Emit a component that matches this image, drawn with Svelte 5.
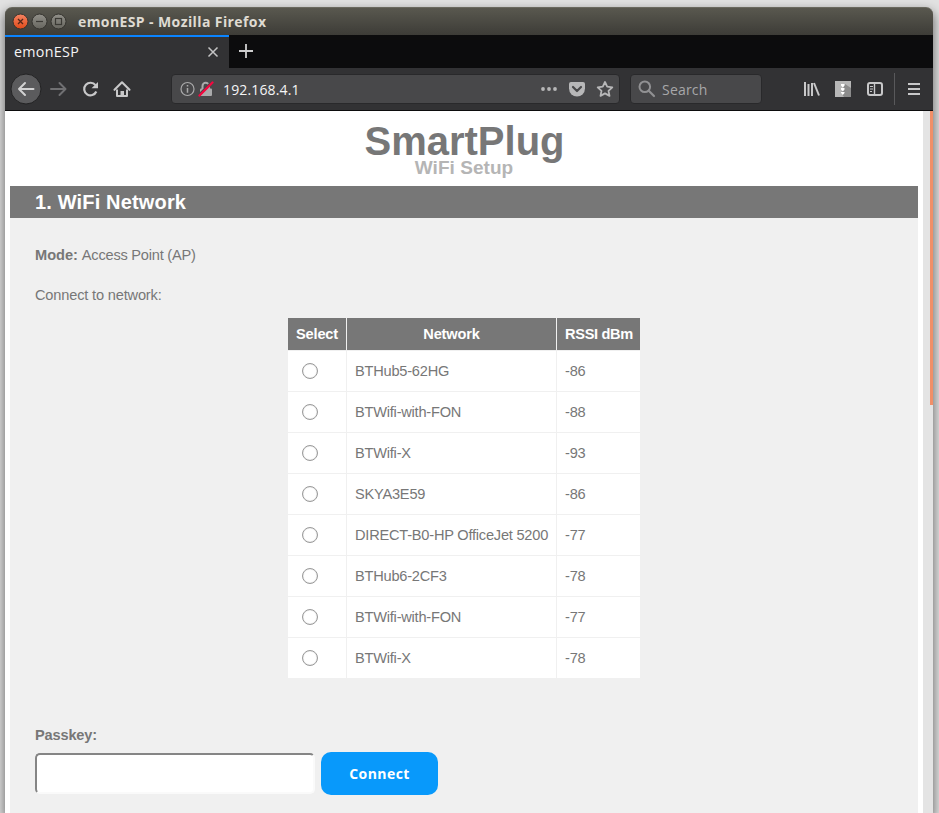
<script>
  const networks = [
    ['BTHub5-62HG', -86],
    ['BTWifi-with-FON', -88],
    ['BTWifi-X', -93],
    ['SKYA3E59', -86],
    ['DIRECT-B0-HP OfficeJet 5200', -77],
    ['BTHub6-2CF3', -78],
    ['BTWifi-with-FON', -77],
    ['BTWifi-X', -78]
  ];
</script>

<div class="desktop">
  <div class="window">
    <header class="titlebar">
      <svg class="controls" width="56" height="18" viewBox="0 0 56 18">
        <defs>
          <linearGradient id="close" x2="0" y2="1"><stop stop-color="#f58463" /><stop offset="1" stop-color="#df4a18" /></linearGradient>
          <linearGradient id="ctl" x2="0" y2="1"><stop stop-color="#92918a" /><stop offset="1" stop-color="#66655e" /></linearGradient>
        </defs>
        <circle cx="8.5" cy="8.500" r="7.5" fill="url(#close)" stroke="#35342f" />
        <circle cx="27.5" cy="8.500" r="7.5" fill="url(#ctl)" stroke="#35342f" />
        <circle cx="46.5" cy="8.500" r="7.5" fill="url(#ctl)" stroke="#35342f" />
        <path d="M6 6l5 5M11 6l-5 5" stroke="#552719" stroke-width="1.3" />
        <path d="M24 8.500h7" stroke="#3b3a35" stroke-width="1.2" />
        <rect x="43.5" y="5.5" width="6" height="6" fill="none" stroke="#3b3a35" stroke-width="1.2" />
      </svg>
      <span class="title">emonESP - Mozilla Firefox</span>
    </header>

    <div class="tabs">
      <div class="tab">
        <span>emonESP</span>
        <svg width="12" height="12" viewBox="0 0 12 12"><path d="M1.5 1.5l9 9M10.5 1.5l-9 9" stroke="#c4c4c5" stroke-width="1.5" /></svg>
      </div>
      <svg class="plus" width="14" height="14" viewBox="0 0 14 14"><path d="M7 0v14M0 7h14" stroke="#cfcfcf" stroke-width="1.8" /></svg>
    </div>

    <nav class="toolbar">
      <svg class="history" width="130" height="32" viewBox="0 0 130 32" fill="none">
        <circle cx="16" cy="16" r="15" fill="#5b5b5d" stroke="#232324" />
        <path d="M23.500 16H9M15 10L9 16l6 6" stroke="#d2d2d3" stroke-width="2" stroke-linecap="round" stroke-linejoin="round" />
        <path d="M41 16h14M49.500 10l6 6l-6 6" stroke="#707072" stroke-width="2" stroke-linecap="round" stroke-linejoin="round" />
        <path d="M85.500 12.200A6.300 6.300 0 1 0 86.300 18.500" stroke="#c8c8c9" stroke-width="2.2" />
        <path d="M88 9v6.200h-6.500z" fill="#c8c8c9" />
        <path d="M104.500 16.800L112 9.300l7.500 7.500" stroke="#c8c8c9" stroke-width="2.100" stroke-linecap="round" stroke-linejoin="round" />
        <path d="M107 16.500V23h10v-6.500" stroke="#c8c8c9" stroke-width="2" stroke-linejoin="round" />
        <path d="M110.500 18h3.500v5h-3.500z" fill="#c8c8c9" />
      </svg>
      <div class="address">
        <svg width="34" height="18" viewBox="0 0 34 18" fill="none">
          <circle cx="7.500" cy="9" r="6.500" stroke="#aaaaab" stroke-width="1.200" />
          <path d="M7.500 8v4.700M7.500 5v1.600" stroke="#aaaaab" stroke-width="1.500" />
          <path d="M22.500 9V6a3.200 3.200 0 0 1 6.400 0v3" stroke="#aaaaab" stroke-width="2" />
          <rect x="20" y="8.500" width="12" height="7.500" rx="1" fill="#aaaaab" />
          <path d="M19.500 14.500L31.500 2.500" stroke="#48484a" stroke-width="2.500" />
          <path d="M19.500 15.500L32.500 2.500" stroke="#f5063f" stroke-width="2.300" stroke-linecap="round" />
        </svg>
        <span class="url">192.168.4.1</span>
        <svg class="actions" width="74" height="18" viewBox="0 0 74 18" fill="#b7b7b8">
          <circle cx="3" cy="9" r="1.900" /><circle cx="9" cy="9" r="1.900" /><circle cx="15" cy="9" r="1.900" />
          <path d="M31 2h12q2 0 2 2v4.500a8 8 0 0 1-16 0V4q0-2 2-2z" />
          <path d="M33 7l4 4l4-4" fill="none" stroke="#48484a" stroke-width="2.200" stroke-linecap="round" stroke-linejoin="round" />
          <path d="M65 2l2.200 4.700l5.100.6l-3.800 3.500l1 5.100L65 13.400l-4.500 2.500l1-5.100l-3.800-3.500l5.100-.6z" fill="none" stroke="#b7b7b8" stroke-width="1.800" stroke-linejoin="round" />
        </svg>
      </div>
      <div class="search">
        <svg width="18" height="18" viewBox="0 0 18 18" fill="none" stroke="#919193"><circle cx="6.800" cy="6.800" r="5.300" stroke-width="2" /><path d="M10.700 10.700l5.300 5.300" stroke-width="2.200" stroke-linecap="round" /></svg>
        <span>Search</span>
      </div>
      <svg class="tools" width="124" height="32" viewBox="0 0 124 32" fill="none" stroke="#c8c8c9">
        <path d="M4 9v14M7.500 11v12M11 10v13" stroke-width="2" /><path d="M13 10l5 12.500" stroke-width="2" />
        <rect x="34" y="8" width="16" height="16" fill="#b7b7b7" stroke="none" />
        <path d="M44 11l6 4v9h-7l-3-4z" fill="#8b8b8b" stroke="none" />
        <path d="M40 11h3.500v1.500l-1.700 2l-1.800-2zM40 15h3.500v1.500l-1.700 2l-1.800-2zM40 19h3.500v1l-1.700 2l-1.800-2z" fill="#fff" stroke="none" />
        <rect x="67" y="10" width="14" height="12" rx="2" stroke-width="2" />
        <path d="M73.500 10v12" stroke-width="1.400" /><path d="M69 13.500h3M69 16h3M69 18.500h2" stroke-width="1.100" />
        <path d="M93.500 0v32" stroke="#59595b" />
        <path d="M107 11h12M107 16h12M107 21h12" stroke-width="2" />
      </svg>
    </nav>

    <div class="viewport">
      <main>
        <div class="heading">
          <h1>SmartPlug</h1>
          <h2>WiFi Setup</h2>
        </div>
        <section>
          <h3>1. WiFi Network</h3>
          <div class="body">
            <p><b>Mode:</b> <span>Access Point (AP)</span></p>
            <p class="connect-label">Connect to network:</p>
            <table>
              <thead><tr><th class="select">Select</th><th class="network">Network</th><th class="rssi">RSSI dBm</th></tr></thead>
              <tbody>
                {#each networks as [name, rssi]}
                  <tr><td><input type="radio" name="network" aria-label={name} /></td><td>{name}</td><td>{rssi}</td></tr>
                {/each}
              </tbody>
            </table>
            <label for="passkey">Passkey:</label>
            <div class="join">
              <input id="passkey" type="text" />
              <button>Connect</button>
            </div>
          </div>
        </section>
      </main>
      <div class="scroll"><div class="thumb"></div></div>
    </div>
  </div>
</div>

<style>
  :global(body) { margin: 0; overflow: hidden; }
  * { box-sizing: border-box; }
  svg { display: block; flex: none; }
  .desktop {
    width: 939px; height: 813px; padding: 7px 6px 0 5px; overflow: hidden;
    background: #e2e2e2; font-family: "Open Sans", "Noto Sans", sans-serif;
  }
  .window {
    height: 806px; display: flex; flex-direction: column; border-radius: 7px 7px 0 0;
    box-shadow: 0 5px 11px 1px rgba(0, 0, 0, .52);
  }
  .titlebar {
    height: 28px; flex: none; display: flex; align-items: center; padding-left: 7px;
    border-radius: 7px 7px 0 0; border-top: 1px solid #6a695f;
    background: linear-gradient(#59584f, #3d3c37);
  }
  .title { margin-left: 10px; color: #dfdbd2; font-size: 14px; font-weight: 700; letter-spacing: .4px; white-space: nowrap; }
  .tabs { height: 33px; flex: none; display: flex; align-items: center; background: #0c0c0d; }
  .tab {
    width: 224px; height: 33px; display: flex; align-items: center; justify-content: space-between;
    padding: 0 10px 0 9px; border-top: 2px solid #0a84ff; background: #323234; color: #f5f5f6;
    font-size: 14.3px; letter-spacing: .3px;
  }
  .tab span { margin-top: -2px; }
  .tab svg { margin-top: -2px; }
  .plus { margin: -1px 0 0 10px; }
  .toolbar {
    height: 43px; flex: none; display: flex; align-items: center; background: #323234;
    border-bottom: 1px solid #0c0c0d; padding-left: 5px;
  }
  .address, .search {
    height: 30px; display: flex; align-items: center; background: #48484a;
    border: 1px solid #29292b; border-radius: 4px;
  }
  .address { width: 449px; margin-left: 31px; padding: 0 5px 0 8px; }
  .url { margin-left: 9px; color: #f5f5f6; font-size: 14px; letter-spacing: .15px; }
  .actions { margin-left: auto; }
  .search { width: 132px; margin-left: 10px; padding-left: 7px; }
  .search span { margin-left: 6px; color: #a7a7a9; font-size: 14px; letter-spacing: .2px; }
  .tools { margin-left: 39px; }
  .viewport { flex: 1; min-height: 0; display: flex; background: #fff; }
  main {
    width: 918px; padding: 0 5px; overflow: hidden; color: #777;
    font-family: "Liberation Sans", Arial, sans-serif; font-size: 14.6px; letter-spacing: -.17px;
  }
  .heading { height: 75px; padding-top: 10px; text-align: center; }
  h1 { margin: 0; padding-left: 1px; font-size: 40px; line-height: 40px; letter-spacing: 0; }
  h2 { margin: -4px 0 0; color: #b5b5b5; font-size: 19px; line-height: 22px; letter-spacing: .05px; }
  section { height: 640px; background: #f0f0f0; }
  h3 { margin: 0; height: 32px; padding-left: 25px; background: #777; color: #fff; font-size: 20px; line-height: 32px; letter-spacing: .16px; }
  .body { padding: 27px 25px 0; }
  p { margin: 0; height: 20px; line-height: 20px; }
  b { letter-spacing: 0; }
  p span { letter-spacing: -.23px; }
  .connect-label { margin-top: 20px; }
  table { margin: 13px 0 0 253px; width: 352px; border-collapse: separate; border-spacing: 0; table-layout: fixed; }
  th, td { border-right: 1px solid #f0f0f0; padding: 0 8px; white-space: nowrap; }
  th:last-child, td:last-child { border-right: 0; }
  th { height: 32px; padding: 0; background: #777; color: #fff; }
  td { height: 41px; background: #fff; border-top: 1px solid #f0f0f0; letter-spacing: -.22px; }
  .select { width: 59px; }
  .network { width: 210px; }
  .rssi { padding-left: 1px; letter-spacing: -.32px; }
  td input {
    display: block; appearance: none; width: 16px; height: 16px; margin: 0 0 0 6px;
    border: 1px solid #999; border-radius: 50%; background: #fff; box-shadow: inset 0 0 1px #aaa;
  }
  label { display: block; margin-top: 47px; height: 20px; line-height: 20px; font-weight: 700; }
  .join { display: flex; align-items: center; gap: 6px; margin-top: 7px; }
  .join input { width: 280px; height: 41px; border: 2px solid; border-color: #858585 #fafafa #fafafa #858585; border-radius: 5px; background: #fff; }
  .join button {
    width: 117px; height: 43px; padding: 0; border: 0; border-radius: 10px; background: #0899fb; color: #fff;
    font: 700 14px "Open Sans", "Noto Sans", sans-serif; letter-spacing: .45px;
  }
  .scroll { flex: 1; display: flex; justify-content: flex-end; background: #e4e4e4; }
  .thumb { width: 3px; height: 294px; background: #f18f68; }
</style>
